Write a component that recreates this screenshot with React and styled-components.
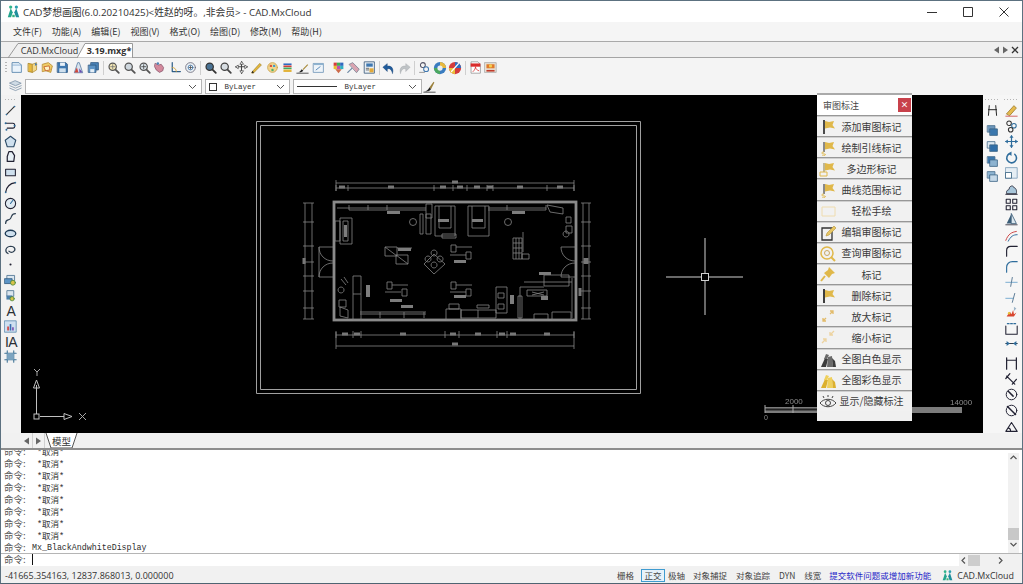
import React from "react";
import styled, { createGlobalStyle } from "styled-components";

const UI_FONT = `"Open Sans", "Noto Sans CJK SC", sans-serif`;
const CJK_FONT = `"Noto Sans CJK SC", sans-serif`;

const GlobalStyle = createGlobalStyle`
  html, body { margin: 0; padding: 0; background: #f3f3f3; }
  #root { width: 1023px; height: 584px; overflow: hidden; }
`;

const Window = styled.div`
  width: 1023px;
  height: 584px;
  display: flex;
  flex-direction: column;
  box-sizing: border-box;
  border-top: 1px solid #5c7180;
  border-left: 1px solid #5c7180;
  border-right: 1px solid #5c7180;
  border-bottom: 1px solid #4f6472;
  background: #f3f3f3;
  color: #2b2b2b;
  font-family: ${UI_FONT};
  overflow: hidden;
`;

const TitleBar = styled.div`
  height: 21px;
  flex: none;
  display: flex;
  align-items: center;
  background: #fff;
  padding-left: 6px;
`;
const TitleText = styled.div`
  margin-left: 3px;
  font-size: 9.8px;
  color: #333;
  white-space: nowrap;
  flex: 1;
`;
const WinButton = styled.div`
  width: 36px;
  height: 21px;
  display: flex;
  align-items: center;
  justify-content: center;
`;

const MenuBar = styled.div`
  height: 19px;
  flex: none;
  display: flex;
  align-items: center;
  gap: 9.800px;
  padding-left: 12px;
  background: #f5f5f5;
  font-family: ${CJK_FONT};
  font-size: 9px;
  color: #333;
`;

const TabStrip = styled.div`
  height: 17px;
  flex: none;
  box-sizing: border-box;
  display: flex;
  align-items: flex-end;
  padding-left: 7px;
  background: #efefef;
  border-top: 1px solid #a9a9a9;
  border-bottom: 1px solid #a4a4a4;
`;
const Tab = styled.div`
  position: relative;
  height: 15px;
  width: ${(p) => p.$w}px;
  box-sizing: border-box;
  padding-left: ${(p) => p.$pl || 0}px;
  margin-left: ${(p) => p.$ml || 0}px;
  margin-bottom: -1px;
  flex: none;
  display: flex;
  align-items: center;
  justify-content: center;
  font-size: 9px;
  font-weight: ${(p) => (p.$active ? 700 : 400)};
  color: #333;
  span { position: relative; }
`;
const TabShape = styled.svg`
  position: absolute;
  left: 0;
  top: 0;
`;
const TabNav = styled.div`
  margin-left: auto;
  height: 15px;
  display: flex;
  align-items: center;
  gap: 2px;
  padding-right: 3px;
`;

const ToolRow = styled.div`
  height: ${(p) => p.$h}px;
  flex: none;
  display: flex;
  align-items: center;
  padding-left: ${(p) => p.$pl}px;
  background: #f4f4f4;
`;
const Slot = styled.div`
  width: ${(p) => p.$w || 15.4}px;
  height: ${(p) => p.$h || 15.4}px;
  flex: none;
  display: flex;
  align-items: center;
  justify-content: center;
`;
const GlyphIcon = styled.span`
  font-family: "Liberation Sans", sans-serif;
  font-size: 14px;
  line-height: 1;
  letter-spacing: -0.5px;
  color: #2a2f35;
`;
const Sep = styled.div`
  width: 4.6px;
  height: 14px;
  flex: none;
  display: flex;
  justify-content: center;
  &::after {
    content: "";
    width: 1px;
    background: ${(p) => (p.$blank ? "transparent" : "#cfcfcf")};
  }
`;
const Grip = styled.div`
  flex: none;
  width: 2px;
  height: 12px;
  margin-right: 2px;
  background: repeating-linear-gradient(to bottom, #b5b5b5 0 1px, transparent 1px 3px);
`;
const FlatGrip = styled.div`
  flex: none;
  width: ${(p) => p.$w || 12}px;
  height: 1px;
  margin-bottom: ${(p) => p.$mb || 3}px;
  background: repeating-linear-gradient(to right, #b5b5b5 0 1px, transparent 1px 3px);
`;
const Combo = styled.div`
  width: ${(p) => p.$w}px;
  height: 15px;
  margin-left: ${(p) => p.$ml || 0}px;
  box-sizing: border-box;
  flex: none;
  display: flex;
  align-items: center;
  gap: 7px;
  padding: 0 4px 0 ${(p) => p.$pl || 4}px;
  background: #fff;
  border: 1px solid #b4b4b4;
  font-family: "Liberation Mono", monospace;
  font-size: 7.5px;
  color: #333;
`;
const ComboArrow = styled.svg`
  margin-left: auto;
  flex: none;
`;
const ColorSwatch = styled.div`
  width: 8px;
  height: 8px;
  box-sizing: border-box;
  border: 1px solid #333;
  background: #fff;
`;
const LineSample = styled.div`
  width: 40px;
  height: 1px;
  background: #333;
`;

const Main = styled.div`
  height: 338px;
  flex: none;
  display: flex;
`;
const SideBar = styled.div`
  width: 20px;
  flex: none;
  display: flex;
  flex-direction: column;
  align-items: center;
  padding-top: 4px;
  box-sizing: border-box;
  background: #f2f2f2;
`;
const Canvas = styled.div`
  position: relative;
  width: 962px;
  flex: none;
  background: #000;
`;
const Drawing = styled.svg`
  display: block;
  filter: blur(0.35px);
`;
const RightDock = styled.div`
  width: 39px;
  flex: none;
  display: flex;
  background: #f6f6f6;
`;
const DockColumn = styled.div`
  width: ${(p) => p.$w}px;
  flex: none;
  display: flex;
  flex-direction: column;
  align-items: center;
  padding-top: 4px;
  box-sizing: border-box;
`;
const ColGap = styled.div`
  height: ${(p) => p.$h}px;
  flex: none;
`;

const MarkPanel = styled.div`
  position: absolute;
  left: 796px;
  top: -2px;
  width: 95px;
  height: 328px;
  box-sizing: border-box;
  display: flex;
  flex-direction: column;
  background: #f0f0f0;
  border-top: 2px solid #aaa;
  font-family: ${CJK_FONT};
`;
const PanelHead = styled.div`
  height: 20px;
  flex: none;
  display: flex;
  align-items: center;
  justify-content: space-between;
  padding: 0 1px 0 6px;
  background: #fff;
  font-size: 9px;
  color: #444;
`;
const PanelClose = styled.div`
  width: 13px;
  height: 14px;
  display: flex;
  align-items: center;
  justify-content: center;
  background: #c8414b;
  color: #fff;
  font-size: 8px;
  font-weight: 700;
  line-height: 1;
`;
const MarkButton = styled.div`
  height: 21.15px;
  flex: none;
  box-sizing: border-box;
  display: grid;
  grid-template-columns: 22px 1fr;
  align-items: center;
  padding-right: 8px;
  background: #f1f1f1;
  border-top: 1px solid #979797;
  box-shadow: inset 0 1px 0 #cfcfcf;
  font-size: 10px;
  color: #3a3a3a;
  white-space: nowrap;
`;
const MarkIcon = styled.div`
  display: flex;
  justify-content: center;
`;
const MarkLabel = styled.div`
  text-align: center;
`;

const ModelBar = styled.div`
  height: 17px;
  flex: none;
  display: flex;
  align-items: stretch;
  padding-left: 20px;
  background: #f1f1f1;
  border-bottom: 2px solid #8d8d8d;
  box-sizing: border-box;
`;
const NavBtn = styled.div`
  width: 11px;
  display: flex;
  align-items: center;
  justify-content: center;
  border-right: 1px solid #d0d0d0;
`;
const ModelTab = styled.div`
  position: relative;
  width: 33px;
  display: flex;
  align-items: center;
  justify-content: center;
  font-family: ${CJK_FONT};
  font-size: 9.5px;
  color: #333;
  span { position: relative; }
`;

const CommandArea = styled.div`
  height: 104px;
  flex: none;
  display: flex;
  background: #fff;
  border-bottom: 1px solid #b5b5b5;
  box-sizing: border-box;
`;
const CommandLog = styled.div`
  flex: 1;
  display: flex;
  flex-direction: column;
  justify-content: flex-end;
  overflow: hidden;
  padding-left: 3px;
`;
const CmdLine = styled.div`
  height: 12px;
  flex: none;
  display: flex;
  align-items: center;
  white-space: nowrap;
  font-family: "Liberation Mono", ${CJK_FONT};
  font-size: 8.3px;
  color: #2e2e2e;
`;
const CmdPrompt = styled.span`
  width: ${(p) => p.$w || 28}px;
  flex: none;
  font-family: ${CJK_FONT};
  font-size: 9.5px;
  color: #555;
`;
const CmdCancel = styled.span`
  margin-left: 9px;
  font-family: "Liberation Mono", ${CJK_FONT};
  font-size: 8.5px;
`;
const VScroll = styled.div`
  width: 11px;
  margin: 3px 3px 0 0;
  flex: none;
  display: flex;
  flex-direction: column;
  align-items: center;
  background: #f1f1f1;
`;
const VThumb = styled.div`
  width: 11px;
  height: 12px;
  margin-top: 66px;
  background: #c8c8c8;
`;
const InputRow = styled.div`
  height: 12px;
  flex: none;
  display: flex;
  background: #fff;
  padding-left: 3px;
`;
const InputPrompt = styled.div`
  display: flex;
  align-items: center;
  height: 10px;
`;
const Caret = styled.div`
  width: 1px;
  height: 11px;
  background: #111;
`;
const HScroll = styled.div`
  margin-left: auto;
  width: 63px;
  height: 12px;
  display: flex;
  align-items: center;
  background: #f1f1f1;
`;
const HThumb = styled.div`
  width: 12px;
  height: 11px;
  margin-right: 16px;
  background: #cdcdcd;
`;

const StatusBar = styled.div`
  height: 18px;
  flex: none;
  display: flex;
  align-items: center;
  background: #f1f1f1;
  font-size: 9px;
  color: #444;
  white-space: nowrap;
  padding-left: 4px;
`;
const Coords = styled.div`
  font-size: 9px;
  color: #333;
  margin-right: auto;
`;
const StatusItem = styled.div`
  flex: none;
  height: 13px;
  display: flex;
  align-items: center;
  padding: 0 ${(p) => (p.$on ? 2.500 : 0)}px;
  margin-left: ${(p) => p.$ml || 0}px;
  box-sizing: border-box;
  border: 1px solid ${(p) => (p.$on ? "#3f9bd0" : "transparent")};
  border-width: ${(p) => (p.$on ? 1 : 0)}px;
  background: ${(p) => (p.$on ? "#e6f2fa" : "transparent")};
  font-family: ${CJK_FONT};
  font-size: 8.5px;
`;
const StatusLink = styled.div`
  margin-left: 8px;
  font-family: ${CJK_FONT};
  font-size: 8.5px;
  color: #2626c8;
`;
const Brand = styled.div`
  display: flex;
  align-items: center;
  gap: 4px;
  margin-left: 11px;
  margin-right: 8px;
  font-size: 8.9px;
  color: #333;
`;

const I = ({ children, s = 13 }) => (
  <svg width={s} height={s} viewBox="0 0 16 16" fill="none" strokeLinecap="round" strokeLinejoin="round">
    {children}
  </svg>
);

const Logo = ({ s = 13 }) => (
  <svg width={s} height={s} viewBox="0 0 16 16">
    <path d="M1 15 L4.500 4 L7 9 L5 15Z" fill="#23a58e" />
    <path d="M15 15 L11.500 4 L9 9 L11 15Z" fill="#1f8f9c" />
    <circle cx="4.500" cy="2.500" r="2" fill="#2fb58c" />
    <circle cx="11.500" cy="2.500" r="2" fill="#2a9fb0" />
    <path d="M6.500 12 h3 v3 h-3z" fill="#37b37e" />
  </svg>
);

const MAG = (fill, st = "#555") => (
  <>
    <circle cx="7" cy="7" r="4.500" fill={fill} stroke={st} strokeWidth="1.500" />
    <path d="M10.500 10.500 L14.500 14.500" stroke={st} strokeWidth="2.200" />
  </>
);

const TOP_ICONS = [
  [
    <I><path d="M3 2h8l3 3v9H3z" fill="#eaf3fb" stroke="#4d7ea8" /><path d="M3 5h11" stroke="#7fa9cc" /></I>,
    <I><path d="M3 3l5 1v10l-5-1z" fill="#e8b93c" stroke="#a6801e" /><path d="M8 4l5-2v9l-5 3z" fill="#f2d88a" stroke="#b8923a" /><path d="M11 2l3 2-3 2z" fill="#4a7fb0" /></I>,
    <I><path d="M2 4l7-2 5 4-2 8-6-2-4 1z" fill="#f0cd67" stroke="#b8892a" /><path d="M4 7l6-1 1 5-5 1z" fill="#fff3c4" stroke="#c45b2a" /></I>,
    <I><path d="M2 2h10l2 2v10H2z" fill="#3f78b0" stroke="#2a5580" /><path d="M5 2h6v4H5z" fill="#e9f1f8" /><path d="M4 9h8v5H4z" fill="#cfe0ee" /></I>,
    <I><path d="M3 14L7 2h2l4 12z" fill="#d8e3ee" stroke="#5b7fa5" /><path d="M3 14l3-6 2 6z" fill="#d0473c" /><path d="M9 9l4 5H9z" fill="#6a4fb0" /></I>,
    <I><path d="M5 2h9v9H5z" fill="#4a84b8" stroke="#2a5580" /><path d="M2 5h9v9H2z" fill="#5c94c6" stroke="#2a5580" /><path d="M4 10h5v4H4z" fill="#e4eef6" /></I>,
  ],
  [
    <I>{MAG("#f3e7b4")}<path d="M7 4.500v5M4.500 7h5" stroke="#777" /></I>,
    <I>{MAG("#cfd8df")}</I>,
    <I>{MAG("#dce6ec")}<path d="M7 4.500v5M4.500 7h5" stroke="#444" /></I>,
    <I><path d="M3 3l4 2 3-1 3 4-1 4-4 2-4-3-2-4z" fill="#d3899c" stroke="#8c5a70" /><circle cx="6" cy="3" r="1.500" fill="#4a84b8" /></I>,
    <I><path d="M4 2v11h10" stroke="#2d5d88" strokeWidth="1.500" /><path d="M4 8c3 0 5 2 5 5" stroke="#d0a030" /></I>,
    <I><circle cx="8" cy="8" r="6" fill="#eef3f6" stroke="#667" /><circle cx="8" cy="8" r="3" stroke="#3f78b0" /><path d="M8 6v4M6 8h4" stroke="#555" /></I>,
  ],
  [
    <I>{MAG("#4a7394", "#333")}</I>,
    <I>{MAG("#d7dde2", "#444")}</I>,
    <I><path d="M8 1v14M1 7h14" stroke="#444" strokeWidth="1.300" /><path d="M8 1L6 4h4zM8 15l-2-3h4zM1 7l3-2v4zM15 7l-3-2v4z" fill="#fff" stroke="#333" strokeWidth=".8" /></I>,
    <I><path d="M2 14L12 3l2 2L4 15z" fill="#e6b93c" stroke="#9a7a20" strokeWidth=".8" /><path d="M2 15l1-3 2 2z" fill="#222" /></I>,
    <I><circle cx="8" cy="8" r="6" fill="#f1d58f" stroke="#c9a24a" /><circle cx="6" cy="6" r="1.500" fill="#d8503c" /><circle cx="10" cy="6" r="1.500" fill="#3f9bd0" /><circle cx="8" cy="11" r="1.500" fill="#4fae6a" /></I>,
    <I><path d="M3 3h10v2H3z" fill="#3068c0" /><path d="M3 5.500h10v2H3z" fill="#d0403c" /><path d="M3 8h10v2H3z" fill="#46a860" /><path d="M3 10.500h10v3H3z" fill="#e3b33a" /></I>,
    <I><path d="M1 14c3 0 4-1 6-4l2 2c-2 2-4 2-8 2z" fill="#222" /><path d="M8 10l6-6 1 1-6 6z" fill="#a88a3a" /><path d="M1 15h14" stroke="#333" /></I>,
    <I><path d="M2 3h12v11H2z" fill="#eef4f9" stroke="#6c93b5" /><path d="M2 3h12v2H2z" fill="#8fb3d0" /><path d="M5 11l5-4" stroke="#3f78b0" /></I>,
  ],
  [
    <I><path d="M2 2h4v4H2z" fill="#d83c3c" /><path d="M6 2h4v4H6z" fill="#3cb054" /><path d="M10 2h4v4h-4z" fill="#3068c0" /><path d="M2 6h4v4H2z" fill="#e8c030" /><path d="M6 6h4v4H6z" fill="#c050b0" /><path d="M10 6h4v4h-4z" fill="#30b0c0" /><path d="M4 10l4 5 4-5z" fill="#cc6a4a" /></I>,
    <I><path d="M3 4l4-2 8 8-3 4z" fill="#d9a3b0" stroke="#7a7f90" /><path d="M1 14l5-5" stroke="#6f8aa5" strokeWidth="1.500" /></I>,
    <I><path d="M2 1h12v14H2z" fill="#eaf0f5" stroke="#38587a" /><path d="M4 3h8v4H4z" fill="#3f78b0" /><path d="M8 9h5v5H8z" fill="#e2a93a" /><path d="M4 9h3M4 11h3" stroke="#555" /></I>,
  ],
  [
    <I s={14}><path d="M12 14C14 8 10 5 6 6V3L1 7l5 5V9c3-1 5 1 6 5z" fill="#1f5c9c" stroke="#153f70" strokeWidth=".5" /></I>,
    <I s={14}><path d="M4 14C2 8 6 5 10 6V3l5 4-5 5V9c-3-1-5 1-6 5z" fill="#bfc3c6" stroke="#a5a9ac" strokeWidth=".5" /></I>,
  ],
  [
    <I><circle cx="6" cy="5" r="3" stroke="#556" strokeWidth="1.300" /><circle cx="10" cy="10" r="3" stroke="#3f78b0" strokeWidth="1.300" /><path d="M2 14h6" stroke="#888" /></I>,
    <I s={14}><circle cx="8" cy="8" r="7" fill="#3a7cc0" /><path d="M8 1a7 7 0 0 1 7 7H8z" fill="#e9b93c" /><path d="M1 8a7 7 0 0 0 7 7V8z" fill="#4ba860" /><circle cx="8" cy="8" r="3" fill="#e8eef0" /></I>,
    <I s={14}><circle cx="8" cy="8" r="7" fill="#d43c3c" /><path d="M8 1a7 7 0 0 1 7 7H8z" fill="#2f6fc0" /><path d="M1 8a7 7 0 0 0 7 7V8z" fill="#e9c13c" /><path d="M4 12L12 3" stroke="#fff" strokeWidth="1.500" /></I>,
  ],
  [
    <I><path d="M3 1h8l3 3v11H3z" fill="#fff" stroke="#999" /><path d="M2 3h12v4H2z" fill="#d92c2c" /><path d="M5 13c2-2 3-4 3-6 0 3 2 4 4 5" stroke="#d92c2c" /></I>,
    <I><path d="M1 2h14v12H1z" fill="#e8e0d4" stroke="#aaa" /><path d="M3 4h10v5H3z" fill="#e07a2a" /><path d="M3 11h10v2H3z" fill="#c03a2a" /><circle cx="8" cy="6" r="2" fill="#f4cf50" /></I>,
  ],
];

const stroke = (d, w = 1.300, c = "#2f6d9c") => <path d={d} stroke={c} strokeWidth={w} />;
const LEFT_ICONS = [
  <I><path d="M3 13L13 3" stroke="#333" strokeWidth="1.300" /><circle cx="3" cy="13" r="1" fill="#2f6d9c" /><circle cx="13" cy="3" r="1" fill="#2f6d9c" /></I>,
  <I>{stroke("M2 4h9c3 0 3 6 0 6H4", 1.300, "#223")}<circle cx="2" cy="4" r="1.200" fill="#2f6d9c" /><circle cx="3" cy="12" r="1.200" fill="#2f6d9c" /><circle cx="13" cy="7" r="1.200" fill="#2f6d9c" /></I>,
  <I><path d="M8 1.500l6.500 5-2.500 8H4l-2.500-8z" fill="#cfe0ee" stroke="#2b4a66" strokeWidth="1.300" /></I>,
  <I><path d="M6 2h4l3 5-1 7H4V8z" fill="#e8f0f6" stroke="#223" strokeWidth="1.500" /></I>,
  <I><path d="M2 4h12v8H2z" fill="#cfe0ee" stroke="#223" strokeWidth="1.300" /></I>,
  <I>{stroke("M2 14C3 7 7 3 14 2", 1.500, "#223")}<circle cx="2" cy="14" r="1" fill="#2f6d9c" /><circle cx="14" cy="2" r="1" fill="#2f6d9c" /></I>,
  <I><circle cx="8" cy="8" r="6.300" fill="#dfeaf2" stroke="#223" strokeWidth="1.300" /><path d="M8 8l3-4" stroke="#2f6d9c" strokeWidth="1.300" /></I>,
  <I>{stroke("M2 14C2 8 6 11 8 8s1-6 6-6", 1.500, "#2c3e50")}</I>,
  <I><ellipse cx="8" cy="8" rx="6.500" ry="4" fill="#cfe0ee" stroke="#1d3a55" strokeWidth="1.600" /></I>,
  <I>{stroke("M5 13C1 11 1 5 8 4c6 0 7 5 3 7-2 1-4 0-5-1", 1.500, "#2c3e50")}</I>,
  <I><circle cx="8" cy="8" r="1.300" fill="#223" /></I>,
  <I><path d="M4 3h9v7H4z" fill="#dbe6ef" stroke="#49708f" /><path d="M1 7h9v6H1z" fill="#5c94c6" stroke="#2f5a80" /><circle cx="11" cy="12" r="3" fill="#d8c24a" stroke="#4a8a3a" /></I>,
  <I><path d="M4 2h8v7H4z" fill="#dbe6ef" stroke="#49708f" /><path d="M3 8h7v5H3z" fill="#4c7fab" /><circle cx="10" cy="12" r="2.600" fill="#d8c24a" stroke="#4a8a3a" /></I>,
  <GlyphIcon>A</GlyphIcon>,
  <I><path d="M1 1h14v14H1z" fill="#cfe0f0" stroke="#5c8ab0" /><path d="M4 8h2v5H4z" fill="#d0403c" /><path d="M7 5h2v8H7z" fill="#3a6fb0" /><path d="M10 9h2v4h-2z" fill="#7a4fb0" /></I>,
  <GlyphIcon>IA</GlyphIcon>,
  <I>{stroke("M4 1v14M12 1v14M1 4h14M1 12h14", 1.300, "#3f7396")}<path d="M4 4h8v8H4z" fill="#7ca4c0" /></I>,
];

const layered = (a, b) => (
  <I>
    <path d="M2 2h9v8H2z" fill={a} stroke="#466c8d" />
    <path d="M5 6h9v8H5z" fill={b} stroke="#3a6285" />
  </I>
);
const DOCK_COL1_TOP = <I>{stroke("M4 2L3 14M12 2l1 12M3 7h10", 1.200, "#222")}</I>;
const DOCK_COL1 = [
  layered("#6d97bb", "#3b78ae"),
  layered("#dce8f1", "#2f6ea8"),
  layered("#3b78ae", "#8db3d0"),
  layered("#8fb5d2", "#c6d9e8"),
];
const DOCK_COL2 = [
  <I><path d="M2 12L11 2l3 3-8 9z" fill="#e6bb4e" stroke="#9c7a2a" /><path d="M1 15h14" stroke="#c44" /></I>,
  <I><circle cx="5" cy="4" r="2.800" stroke="#333" strokeWidth="1.300" /><circle cx="11" cy="7" r="2.800" stroke="#2f6d9c" strokeWidth="1.300" /><circle cx="7" cy="12" r="2.800" stroke="#333" strokeWidth="1.300" /></I>,
  <I><path d="M8 1v14M1 8h14" stroke="#2f6d9c" strokeWidth="1.500" /><path d="M8 0L5.500 3.500h5zM8 16l-2.500-3.500h5zM0 8l3.500-2.500v5zM16 8l-3.500-2.500v5z" fill="#2f6d9c" /></I>,
  <I><path d="M6 3a6 6 0 1 0 6 1" stroke="#2f6d9c" strokeWidth="1.900" /><path d="M8 0.500L4 3l4 3z" fill="#2f6d9c" /></I>,
  <I><path d="M1 2h14v13H1z" fill="#e6eef4" stroke="#7a9db8" /><path d="M1 8h7v7H1z" fill="#fff" stroke="#35607f" /></I>,
  <I><path d="M2 14c-1-4 2-4 3-5 0-4 5-6 6-2 2 0 4 3 3 7z" fill="#a8c6da" stroke="#223" /><path d="M1 15h14" stroke="#223" strokeWidth="1.300" /></I>,
  <I><path d="M1.500 1.500h5v5h-5zM9.500 1.500h5v5h-5zM1.500 9.500h5v5h-5zM9.500 9.500h5v5h-5z" stroke="#223" strokeWidth="1.300" /></I>,
  <I><path d="M8 1L2 13h6z" fill="#3a5d78" /><path d="M8 1l6 12H8z" fill="#dbe7ef" stroke="#3a5d78" /><path d="M1 14.500h14" stroke="#223" /></I>,
  <I>{stroke("M1 14c3-8 7-10 13-11", 1.200, "#c44")}{stroke("M4 15c3-6 6-8 11-8", 1.200, "#2f6d9c")}</I>,
  <I>{stroke("M2 15V8c0-3 2-5 5-5h8", 1.400, "#223")}</I>,
  <I>{stroke("M2 15V9c0-4 3-7 7-7h6", 1.400, "#2f6d9c")}</I>,
  <I>{stroke("M1 9h14", 1, "#5f9cc7")}{stroke("M9 3L7 14", 1.200, "#5b7a95")}</I>,
  <I>{stroke("M1 9h9", 1, "#5f9cc7")}{stroke("M12 3L9 14", 1.200, "#5b7a95")}</I>,
  <I><path d="M2 13l4-6 2 3 2-5 1 5 3-2-3 5z" fill="#d8452e" /><circle cx="5" cy="9" r="1.500" fill="#e8c03a" /><path d="M11 1l3 2-3 3z" fill="#9db5c8" /></I>,
  <I>{stroke("M1 5v10h14V5", 1.300, "#223")}{stroke("M3 2h2M7 2h2M11 2h2", 1.600, "#2f6d9c")}</I>,
  <I>{stroke("M1 8h14", 1.400, "#2c3e50")}<path d="M2 5l4 3-4 3zM14 5l-4 3 4 3z" fill="#2f6d9c" /></I>,
  <I>{stroke("M2 1v14M14 1v14M2 4h12", 1.500, "#223")}</I>,
  <I>{stroke("M2 5l10 10M1 8l5-6M9 15l5-6", 1.500, "#223")}</I>,
  <I><circle cx="8" cy="8" r="6.500" stroke="#223" strokeWidth="1.200" /><path d="M4 4l6 6" stroke="#223" strokeWidth="1.800" /></I>,
  <I><circle cx="8" cy="8" r="6.500" stroke="#223" strokeWidth="1.200" /><path d="M3 3l10 10" stroke="#223" strokeWidth="1.800" /></I>,
  <I>{stroke("M1 14h14L8 3zM4 10c2 0 3 2 3 4", 1.300, "#223")}</I>,
];

const GOLD = "#e0b84a";
const Flag = ({ pole = "#222", top = 3, h = 14, curve, box }) => (
  <svg width="18" height="18" viewBox="0 0 18 18" fill="none">
    <path d={`M5 ${top}v${h}`} stroke={pole} strokeWidth={curve || box ? 1 : 1.600} />
    <path d="M6 4l4 1 5-1-1.500 4 2.500 3.500-5-1-5 1z" fill={GOLD} />
    {curve && <path d="M5 14c-3 0-3 2 0 2s1 2-2 2" stroke={GOLD} />}
    {box && <path d="M1 13h7v4H1z" stroke={GOLD} />}
  </svg>
);
const Arrows = ({ inward, c = "#e2bb6a" }) => (
  <svg width="18" height="18" viewBox="0 0 18 18" fill="none" stroke={c} strokeWidth="1.300">
    {inward ? (
      <path d="M15 3l-4 4M11 4v3h3M3 15l4-4M7 14v-3H4" />
    ) : (
      <path d="M11 7l3-3M11 4h3v3M7 11l-3 3M4 11v3h3" />
    )}
  </svg>
);
const Blocks = ({ a, b }) => (
  <svg width="18" height="18" viewBox="0 0 18 18">
    <path d="M2 17L6 8l3 1-2 8z" fill={a} />
    <path d="M8 17l1-10 4-1 1 11z" fill={b} />
    <path d="M14 17l-1-9 3 3 1 6z" fill={a} />
    <path d="M5 9l2-5 3 1-2 4z" fill={b} />
  </svg>
);

const MARK_BUTTONS = [
  ["添加审图标记", <Flag />],
  ["绘制引线标记", <Flag curve top={4} h={10} />],
  ["多边形标记", <Flag box pole="#8a7a3a" top={4} h={9} />],
  ["曲线范围标记", <Flag curve top={4} h={10} />],
  ["轻松手绘", (
    <svg width="18" height="18" viewBox="0 0 18 18" fill="none">
      <path d="M3 5h13v9H3z" stroke="#efdcae" />
    </svg>
  )],
  ["编辑审图标记", (
    <svg width="18" height="18" viewBox="0 0 18 18" fill="none">
      <path d="M3 5h10v12H3z" stroke="#333" strokeWidth="1.300" />
      <path d="M7 13l1-3 7-7 2 2-7 7z" fill="#e8c766" stroke="#b6943a" strokeWidth=".6" />
    </svg>
  )],
  ["查询审图标记", (
    <svg width="18" height="18" viewBox="0 0 18 18" fill="none">
      <circle cx="8" cy="9" r="6" stroke={GOLD} strokeWidth="1.500" />
      <circle cx="8" cy="9" r="2.500" stroke="#c9a862" />
      <path d="M12 13l4 4" stroke={GOLD} strokeWidth="2" />
    </svg>
  )],
  ["标记", (
    <svg width="18" height="18" viewBox="0 0 18 18">
      <path d="M10 2l6 6-3 1-3 4-5-5 4-3z" fill={GOLD} />
      <path d="M6 11l-4 5" stroke={GOLD} strokeWidth="2" />
    </svg>
  )],
  ["删除标记", <Flag pole="#111" />],
  ["放大标记", <Arrows />],
  ["缩小标记", <Arrows inward c="#edd3a0" />],
  ["全图白色显示", <Blocks a="#3c3c3c" b="#6a6a6a" />],
  ["全图彩色显示", <Blocks a="#dcb02e" b="#efd05c" />],
  ["显示/隐藏标注", (
    <svg width="18" height="18" viewBox="0 0 18 18" fill="none" stroke="#444">
      <path d="M1 11c4-5 12-5 16 0-4 5-12 5-16 0z" />
      <circle cx="9" cy="11" r="2.500" />
      <path d="M5 6L4 4M9 5V3M13 6l1-2" />
    </svg>
  )],
];

const WALL = "#8a8a8a";
const LINE = "#858585";

const DIM_TICKS_TOP = [336, 348, 434, 453, 467, 487, 493, 547, 574];
const DIM_TICKS_BOTTOM = [336, 353, 361, 445, 459, 497, 507, 574];
const DIM_TICKS_SIDE = [203, 222, 246, 262, 276, 291, 308, 319];

const dimLabel = (x, y, w = 6, h = 3) => <rect x={x - w / 2} y={y - h / 2} width={w} height={h} fill="#777" />;

const FloorPlan = () => (
  <g fill="none" stroke={LINE} strokeWidth=".8">
    {/* dimension lines */}
    <path d={`M336 183H574M336 188H574M336 335H574M336 346H574M305 203V319M312 203V319M583 203V319M589 203V319`} />
    <path d={DIM_TICKS_TOP.map((x) => `M${x} 185V191`).join("")} />
    <path d={DIM_TICKS_BOTTOM.map((x) => `M${x} 331V338`).join("")} />
    <path d="M336 180V191M574 180V191M336 332V349M574 332V349" />
    <path d={DIM_TICKS_SIDE.map((y) => `M303 ${y}H314M581 ${y}H591`).join("")} />
    <g stroke="none">
      {[[342, 187], [391, 187], [443, 187], [460, 187], [477, 187], [490, 187], [520, 187], [560, 187], [455, 182]].map(([x, y]) => (
        <React.Fragment key={`${x}${y}`}>{dimLabel(x, y)}</React.Fragment>
      ))}
      {[[345, 334], [357, 334], [403, 334], [453, 334], [478, 334], [502, 334], [513, 334], [547, 334], [455, 344]].map(([x, y]) => (
        <React.Fragment key={`${x}${y}`}>{dimLabel(x, y)}</React.Fragment>
      ))}
      {dimLabel(304, 261, 3, 6)}
      {dimLabel(586, 261, 5, 6)}
      {dimLabel(580, 292, 3, 8)}
    </g>
    {/* outer walls */}
    <rect x="334" y="202" width="242" height="118" stroke={WALL} strokeWidth="2.800" />
    <path d="M337 208H426M349 210H426M349 205V210M368 205V210M387 205V210M488 208H546M488 210H546M507 205V210M546 205V210M360 314H426M360 312H426M380 312V318M404 312V318M424 312V318" />
    <path d="M426 204h6v14h-6zM547 205l16 3v6l-13-2z" />
    {/* shelves and furniture along the top */}
    <path d="M435 206h20v30h-20zM439 206v22h12v-22M468 206h21v30h-21zM472 206v22h13v-22M442 234h14v4h-14z" />
    <path d="M420 214h3v20h-3zM426 214h5v20h-5z" />
    <rect x="387" y="211" width="13" height="3" fill="#7d7d7d" stroke="none" />
    <rect x="512" y="211" width="13" height="3" fill="#7d7d7d" stroke="none" />
    <rect x="438" y="219" width="11" height="3" fill="#7d7d7d" stroke="none" />
    <rect x="472" y="219" width="11" height="3" fill="#7d7d7d" stroke="none" />
    <circle cx="413" cy="222" r="3.500" />
    <circle cx="508" cy="222" r="3.500" />
    {/* sofa */}
    <path d="M340 218h12v26h-12zM343 221h5v20h-5zM335 221h5v20h-5z" />
    <rect x="344" y="225" width="3" height="12" fill="#7d7d7d" stroke="none" />
    {/* doors */}
    <path d="M333 247H319M333 277H319M319 247V277M319 247c0 8 6 14 14 14M319 277c0-8 6-14 14-14" />
    <path d="M577 247H561M577 277H561M561 247c0 8 6 14 14 14M561 277c0-8 6-14 14-14" />
    {/* tables */}
    <path d="M385 247h12v9h-12zM396 255h12v9h-12zM397 248h15M385 247l12 9M396 255l12 9" />
    <rect x="398" y="248" width="13" height="3" fill="#7d7d7d" stroke="none" />
    {/* fixtures centre */}
    <path d="M451 245h5v7h-5zM456 247h16M450 255h16M466 252h5v7h-5zM451 282h5v7h-5zM456 285h16M450 292h16M466 289h5v7h-5zM387 282h5v7h-5zM392 285h16M385 292h16M402 289h5v7h-5z" />
    <path d="M434 254l11 10-11 10-10-10zM434 256a3 3 0 1 1 .1 0M428 262a3 3 0 1 1 .1 0M440 262a3 3 0 1 1 .1 0M434 268a3 3 0 1 1 .1 0" />
    <rect x="454" y="260" width="12" height="3" fill="#7d7d7d" stroke="none" />
    <rect x="390" y="299" width="12" height="3" fill="#7d7d7d" stroke="none" />
    <rect x="401" y="305" width="12" height="3" fill="#7d7d7d" stroke="none" />
    <rect x="454" y="295" width="12" height="3" fill="#7d7d7d" stroke="none" />
    {/* shelving on the right */}
    <path d="M513 238h9v21h-9zM516 238v21M519 238v21M513 243h9M513 248h9M513 253h9M523 232v20M522 254h7v5h-7z" />
    {/* small items left */}
    <path d="M353 276h8v44h-8zM353 294h8M341 279l5 6M344 277l4 6M341 293a3 3 0 1 1 .1 0M339 300h7v7h-7z" />
    <rect x="366" y="285" width="4" height="12" fill="#7d7d7d" stroke="none" />
    <path d="M340 307l8 3v8l-8-2z" />
    {/* counter right bottom */}
    <path d="M520 287h24M520 287v33M544 275h25v11h-25zM524 282h48M572 278v40M527 290h20v6h-20zM532 292l12 3M532 295l12-3M520 320h9M534 320h14v-6h-14zM552 312h19v8h-19zM518 296h4v22h-4z" />
    <rect x="539" y="272" width="12" height="3" fill="#7d7d7d" stroke="none" />
    <rect x="541" y="296" width="7" height="4" fill="#7d7d7d" stroke="none" />
    <rect x="510" y="295" width="4" height="9" fill="#7d7d7d" stroke="none" />
    <path d="M496 287h11v26h-11zM498 293h6v5h-6zM498 304h6v5h-6z" />
    <path d="M446 309h15v11h-15zM461 310h35v8h-35zM478 310v8M477 305h12v3h-12zM449 304h10v5h-10z" />
    <path d="M566 217h5v6h-5zM566 226h6v7h-6zM566 237a3 3 0 1 1 .1 0" />
  </g>
);

const CadDrawing = () => (
  <Drawing width="962" height="338" viewBox="21 95 962 338" fill="none">
    <path d="M256.500 121.500H640.500V393.500H256.500Z M260.500 125.500H636.500V389.500H260.500Z" stroke="#a0a0a0" />
    <FloorPlan />
    {/* crosshair */}
    <path d="M705 238V273M705 281V315M666 277H701M709 277H743" stroke="#d0d0d0" />
    <rect x="701.500" y="273.500" width="7" height="7" stroke="#d0d0d0" />
    {/* UCS icon */}
    <path d="M36.500 414V385M40 416.500H64" stroke="#c0c0c0" />
    <rect x="34" y="414" width="5" height="5" stroke="#c0c0c0" />
    <path d="M36.500 380l-3 8h6zM72 416.500l-8-3v6z" stroke="#c0c0c0" />
    <path d="M34 369l3 3 3-3M37 372v4M79 413l7 7M86 413l-7 7" stroke="#a8a8a8" />
    {/* scale bar */}
    <path d="M765 407h197v6H765z" fill="#7c7c7c" />
    <path d="M765 409.500H817" stroke="#222" strokeWidth="2" />
    <path d="M765 405v8M793 405v8" stroke="#aaa" />
    <text x="785" y="404" fill="#8c8c8c" fontSize="8" fontFamily="Liberation Sans">2000</text>
    <text x="950" y="405" fill="#8c8c8c" fontSize="8" fontFamily="Liberation Sans">14000</text>
    <text x="764" y="420" fill="#8c8c8c" fontSize="7" fontFamily="Liberation Sans">0</text>
  </Drawing>
);

const TriLeft = () => <svg width="7" height="8" viewBox="0 0 7 8"><path d="M6 .5L1 4l5 3.500z" fill="#666" /></svg>;
const TriRight = () => <svg width="7" height="8" viewBox="0 0 7 8"><path d="M1 .5L6 4 1 7.500z" fill="#666" /></svg>;
const Chevron = ({ d }) => <svg width="9" height="9" viewBox="0 0 9 9" fill="none"><path d={d} stroke="#555" strokeWidth="1.200" /></svg>;

const MENUS = ["文件(F)", "功能(A)", "编辑(E)", "视图(V)", "格式(O)", "绘图(D)", "修改(M)", "帮助(H)"];
const LOG_LINES = 8;

const ToolGroup = ({ icons }) => icons.map((icon, i) => <Slot key={i}>{icon}</Slot>);

export default function App() {
  return (
    <Window>
      <GlobalStyle />
      <TitleBar>
        <Logo />
        <TitleText>CAD梦想画图(6.0.20210425)&lt;姓赵的呀。,非会员&gt; - CAD.MxCloud</TitleText>
        <WinButton><svg width="10" height="10"><path d="M0 5.500H10" stroke="#333" /></svg></WinButton>
        <WinButton><svg width="10" height="10"><path d="M.5.500h9v9h-9z" fill="none" stroke="#333" /></svg></WinButton>
        <WinButton><svg width="10" height="10"><path d="M.5.500l9 9M9.500.500l-9 9" stroke="#333" /></svg></WinButton>
      </TitleBar>

      <MenuBar>
        {MENUS.map((m) => <span key={m}>{m}</span>)}
      </MenuBar>

      <TabStrip>
        <Tab $w={72} $pl={11}>
          <TabShape width="72" height="15"><path d="M0 15L10 .5H71" fill="none" stroke="#999" /></TabShape>
          <span>CAD.MxCloud</span>
        </Tab>
        <Tab $w={56} $ml={-3} $pl={8} $active>
          <TabShape width="56" height="15"><path d="M0 15L8 .5H55.500V15Z" fill="#fff" stroke="#999" /></TabShape>
          <span>3.19.mxg*</span>
        </Tab>
        <TabNav>
          <TriLeft />
          <TriRight />
          <svg width="8" height="8"><path d="M1 1l6 6M7 1l-6 6" stroke="#333" strokeWidth="1.300" /></svg>
        </TabNav>
      </TabStrip>

      <ToolRow $h={20} $pl={4}>
        <Grip />
        <ToolGroup icons={TOP_ICONS[0]} />
        <Sep />
        <ToolGroup icons={TOP_ICONS[1]} />
        <Sep />
        <ToolGroup icons={TOP_ICONS[2]} />
        <Sep $blank />
        <ToolGroup icons={TOP_ICONS[3]} />
        <Sep />
        <ToolGroup icons={TOP_ICONS[4]} />
        <Sep />
        <ToolGroup icons={TOP_ICONS[5]} />
        <Sep />
        <ToolGroup icons={TOP_ICONS[6]} />
      </ToolRow>

      <ToolRow $h={17} $pl={7}>
        <Slot>
          <I>
            <path d="M8 1l7 3-7 3-7-3z" fill="#cfdbe5" stroke="#7c93a8" />
            <path d="M1 7l7 3 7-3M1 10l7 3 7-3" stroke="#7c93a8" />
          </I>
        </Slot>
        <Combo $w={177} $ml={2}><ComboArrow width="9" height="9" viewBox="0 0 9 9"><path d="M1 3l3.500 3.500L8 3" fill="none" stroke="#555" /></ComboArrow></Combo>
        <Combo $w={85} $ml={3} $pl={3}>
          <ColorSwatch />
          ByLayer
          <ComboArrow width="9" height="9" viewBox="0 0 9 9"><path d="M1 3l3.500 3.500L8 3" fill="none" stroke="#555" /></ComboArrow>
        </Combo>
        <Combo $w={129} $ml={3} $pl={3}>
          <LineSample />
          ByLayer
          <ComboArrow width="9" height="9" viewBox="0 0 9 9"><path d="M1 3l3.500 3.500L8 3" fill="none" stroke="#555" /></ComboArrow>
        </Combo>
        <Slot $w={14}>
          <I><path d="M1 14c3 0 5-1 7-5l2 2c-2 3-4 3-9 3z" fill="#222" /><path d="M8 9l5-7 1 1-4 8z" fill="#9a7f3a" /><path d="M1 15h14" stroke="#333" /></I>
        </Slot>
      </ToolRow>

      <Main>
        <SideBar>
          <FlatGrip />
          {LEFT_ICONS.map((icon, i) => <Slot key={i}>{icon}</Slot>)}
        </SideBar>
        <Canvas>
          <CadDrawing />
          <MarkPanel>
            <PanelHead>
              审图标注
              <PanelClose>×</PanelClose>
            </PanelHead>
            {MARK_BUTTONS.map(([label, icon]) => (
              <MarkButton key={label}>
                <MarkIcon>{icon}</MarkIcon>
                <MarkLabel>{label}</MarkLabel>
              </MarkButton>
            ))}
          </MarkPanel>
        </Canvas>
        <RightDock>
          <DockColumn $w={19}>
            <FlatGrip $w={15} />
            <Slot>{DOCK_COL1_TOP}</Slot>
            <ColGap $h={4.6} />
            {DOCK_COL1.map((icon, i) => <Slot key={i}>{icon}</Slot>)}
          </DockColumn>
          <DockColumn $w={19}>
            <FlatGrip $w={15} />
            {DOCK_COL2.slice(0, 16).map((icon, i) => <Slot key={i} $h={15.55}>{icon}</Slot>)}
            <ColGap $h={3.5} />
            {DOCK_COL2.slice(16).map((icon, i) => <Slot key={i} $h={15.75}>{icon}</Slot>)}
          </DockColumn>
        </RightDock>
      </Main>

      <ModelBar>
        <NavBtn><TriLeft /></NavBtn>
        <NavBtn><TriRight /></NavBtn>
        <ModelTab>
          <TabShape width="33" height="15"><path d="M1 0L6 15H27L32 0" fill="#fff" stroke="#555" /></TabShape>
          <span>模型</span>
        </ModelTab>
      </ModelBar>

      <CommandArea>
        <CommandLog>
          {Array.from({ length: LOG_LINES }).map((_, i) => (
            <CmdLine key={i}>
              <CmdPrompt $w={24}>命令:</CmdPrompt>
              <CmdCancel>*取消*</CmdCancel>
            </CmdLine>
          ))}
          <CmdLine>
            <CmdPrompt>命令:</CmdPrompt>
            Mx_BlackAndwhiteDisplay
          </CmdLine>
        </CommandLog>
        <VScroll>
          <Chevron d="M1.500 6L4.500 3l3 3" />
          <VThumb />
          <Chevron d="M1.500 3l3 3 3-3" />
        </VScroll>
      </CommandArea>
      <InputRow>
        <InputPrompt>
          <CmdPrompt>命令:</CmdPrompt>
          <Caret />
        </InputPrompt>
        <HScroll>
          <Chevron d="M6 1.500L3 4.500l3 3" />
          <HThumb />
          <Chevron d="M3 1.500l3 3-3 3" />
        </HScroll>
      </InputRow>

      <StatusBar>
        <Coords>-41665.354163, 12837.868013, 0.000000</Coords>
        <StatusItem>栅格</StatusItem>
        <StatusItem $on $ml={7}>正交</StatusItem>
        <StatusItem $ml={3}>极轴</StatusItem>
        <StatusItem $ml={8}>对象捕捉</StatusItem>
        <StatusItem $ml={9}>对象追踪</StatusItem>
        <StatusItem $ml={9}>DYN</StatusItem>
        <StatusItem $ml={9}>线宽</StatusItem>
        <StatusLink>提交软件问题或增加新功能</StatusLink>
        <Brand><Logo s={11} />CAD.MxCloud</Brand>
      </StatusBar>
    </Window>
  );
}
